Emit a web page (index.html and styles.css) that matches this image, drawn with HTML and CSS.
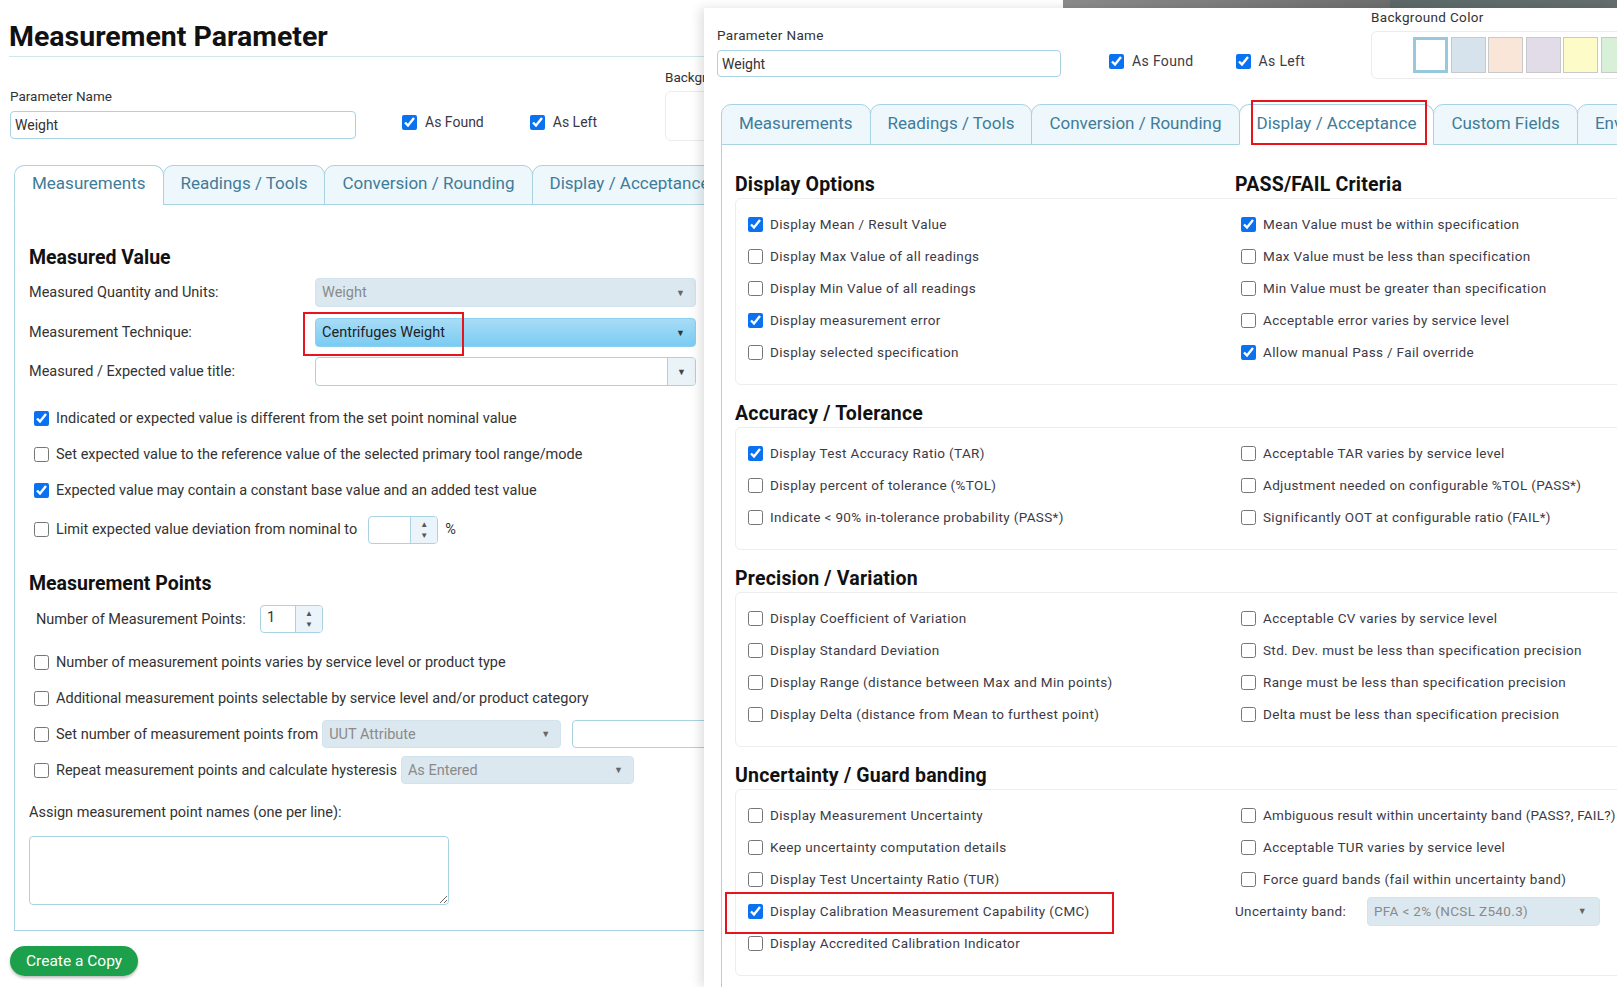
FILE: index.html
```html
<!DOCTYPE html>
<html lang="en">
<head>
  <meta charset="UTF-8" />
  <title>Measurement Parameter</title>
  <link rel="stylesheet" href="styles.css">
</head>
<body>

  <!-- page in the background -->
  <div class="page">
    <h1 class="page-title">Measurement Parameter</h1>

    <div class="param-row">
      <div class="name-group">
        <label class="field-label">Parameter Name</label>
        <input class="text-input name-input" type="text" value="Weight">
      </div>
      <div class="flags">
        <label class="flag"><input type="checkbox" checked> As Found</label>
        <label class="flag"><input type="checkbox" checked> As Left</label>
      </div>
      <div class="bg-group">
        <div class="field-label">Background Color</div>
        <div class="swatch-box"></div>
      </div>
    </div>

    <div class="tabs">
      <div class="tab active">Measurements</div>
      <div class="tab">Readings / Tools</div>
      <div class="tab">Conversion / Rounding</div>
      <div class="tab">Display / Acceptance</div>
    </div>

    <div class="tab-panel">
      <h2 class="section-title">Measured Value</h2>

      <div class="field-row first">
        <span>Measured Quantity and Units:</span>
        <div class="select disabled"><span>Weight</span><i class="arrow">▼</i></div>
      </div>
      <div class="field-row second">
        <span>Measurement Technique:</span>
        <div class="select technique">
          <span>Centrifuges Weight</span><i class="arrow">▼</i>
          <b class="annot annot-technique"></b>
        </div>
      </div>
      <div class="field-row third">
        <span>Measured / Expected value title:</span>
        <div class="combo"><span></span><i class="combo-btn">▼</i></div>
      </div>

      <div class="check-list">
        <label class="check"><input type="checkbox" checked> Indicated or expected value is different from the set point nominal value</label>
        <label class="check"><input type="checkbox"> Set expected value to the reference value of the selected primary tool range/mode</label>
        <label class="check"><input type="checkbox" checked> Expected value may contain a constant base value and an added test value</label>
        <label class="check tall"><input type="checkbox"> Limit expected value deviation from nominal to
          <span class="spinner dev-spin"><span></span><i class="spin-btn">▲<br>▼</i></span> %</label>
      </div>

      <h2 class="section-title points-title">Measurement Points</h2>

      <div class="points-row">
        <span>Number of Measurement Points:</span>
        <span class="spinner count-spin"><span>1</span><i class="spin-btn">▲<br>▼</i></span>
      </div>

      <div class="check-list points-list">
        <label class="check"><input type="checkbox"> Number of measurement points varies by service level or product type</label>
        <label class="check"><input type="checkbox"> Additional measurement points selectable by service level and/or product category</label>
        <label class="check"><input type="checkbox"> Set number of measurement points from
          <span class="select disabled uut"><span>UUT Attribute</span><i class="arrow">▼</i></span>
          <span class="text-input uut-value"></span></label>
        <label class="check"><input type="checkbox"> Repeat measurement points and calculate hysteresis
          <span class="select disabled entered"><span>As Entered</span><i class="arrow">▼</i></span></label>
      </div>

      <div class="names-label">Assign measurement point names (one per line):</div>
      <textarea class="names-box"></textarea>
    </div>

    <button class="btn-copy">Create a Copy</button>
  </div>

  <div class="top-strip"></div>

  <!-- dialog window on top -->
  <div class="dialog">
    <div class="dlg-head">
      <div class="name-group">
        <label class="field-label">Parameter Name</label>
        <input class="text-input name-input" type="text" value="Weight">
      </div>
      <div class="flags">
        <label class="flag"><input type="checkbox" checked> As Found</label>
        <label class="flag"><input type="checkbox" checked> As Left</label>
      </div>
      <div class="bg-group">
        <div class="field-label">Background Color</div>
        <div class="swatch-box">
          <span class="swatch selected"></span>
          <span class="swatch c-blue"></span>
          <span class="swatch c-peach"></span>
          <span class="swatch c-lilac"></span>
          <span class="swatch c-yellow"></span>
          <span class="swatch c-green"></span>
        </div>
      </div>
    </div>

    <div class="tabs">
      <div class="tab">Measurements</div>
      <div class="tab">Readings / Tools</div>
      <div class="tab">Conversion / Rounding</div>
      <div class="tab active">Display / Acceptance<b class="annot annot-tab"></b></div>
      <div class="tab">Custom Fields</div>
      <div class="tab">Environment</div>
    </div>

    <div class="tab-panel">
      <div class="opt-head">
        <h3>Display Options</h3>
        <h3>PASS/FAIL Criteria</h3>
      </div>
      <div class="opt-box">
        <div class="opt-col">
          <label class="opt"><input type="checkbox" checked> Display Mean / Result Value</label>
          <label class="opt"><input type="checkbox"> Display Max Value of all readings</label>
          <label class="opt"><input type="checkbox"> Display Min Value of all readings</label>
          <label class="opt"><input type="checkbox" checked> Display measurement error</label>
          <label class="opt"><input type="checkbox"> Display selected specification</label>
        </div>
        <div class="opt-col">
          <label class="opt"><input type="checkbox" checked> Mean Value must be within specification</label>
          <label class="opt"><input type="checkbox"> Max Value must be less than specification</label>
          <label class="opt"><input type="checkbox"> Min Value must be greater than specification</label>
          <label class="opt"><input type="checkbox"> Acceptable error varies by service level</label>
          <label class="opt"><input type="checkbox" checked> Allow manual Pass / Fail override</label>
        </div>
      </div>

      <div class="opt-head">
        <h3>Accuracy / Tolerance</h3>
      </div>
      <div class="opt-box">
        <div class="opt-col">
          <label class="opt"><input type="checkbox" checked> Display Test Accuracy Ratio (TAR)</label>
          <label class="opt"><input type="checkbox"> Display percent of tolerance (%TOL)</label>
          <label class="opt"><input type="checkbox"> Indicate &lt; 90% in-tolerance probability (PASS*)</label>
        </div>
        <div class="opt-col">
          <label class="opt"><input type="checkbox"> Acceptable TAR varies by service level</label>
          <label class="opt"><input type="checkbox"> Adjustment needed on configurable %TOL (PASS*)</label>
          <label class="opt"><input type="checkbox"> Significantly OOT at configurable ratio (FAIL*)</label>
        </div>
      </div>

      <div class="opt-head">
        <h3>Precision / Variation</h3>
      </div>
      <div class="opt-box">
        <div class="opt-col">
          <label class="opt"><input type="checkbox"> Display Coefficient of Variation</label>
          <label class="opt"><input type="checkbox"> Display Standard Deviation</label>
          <label class="opt"><input type="checkbox"> Display Range (distance between Max and Min points)</label>
          <label class="opt"><input type="checkbox"> Display Delta (distance from Mean to furthest point)</label>
        </div>
        <div class="opt-col">
          <label class="opt"><input type="checkbox"> Acceptable CV varies by service level</label>
          <label class="opt"><input type="checkbox"> Std. Dev. must be less than specification precision</label>
          <label class="opt"><input type="checkbox"> Range must be less than specification precision</label>
          <label class="opt"><input type="checkbox"> Delta must be less than specification precision</label>
        </div>
      </div>

      <div class="opt-head">
        <h3>Uncertainty / Guard banding</h3>
      </div>
      <div class="opt-box">
        <div class="opt-col">
          <label class="opt"><input type="checkbox"> Display Measurement Uncertainty</label>
          <label class="opt"><input type="checkbox"> Keep uncertainty computation details</label>
          <label class="opt"><input type="checkbox"> Display Test Uncertainty Ratio (TUR)</label>
          <label class="opt marked"><input type="checkbox" checked> Display Calibration Measurement Capability (CMC)<b class="annot annot-cmc"></b></label>
          <label class="opt"><input type="checkbox"> Display Accredited Calibration Indicator</label>
        </div>
        <div class="opt-col">
          <label class="opt ambiguous"><input type="checkbox"> Ambiguous result within uncertainty band (PASS?, FAIL?)</label>
          <label class="opt"><input type="checkbox"> Acceptable TUR varies by service level</label>
          <label class="opt"><input type="checkbox"> Force guard bands (fail within uncertainty band)</label>
          <div class="opt band-row">
            <span class="band-label">Uncertainty band:</span>
            <div class="select disabled band"><span>PFA &lt; 2% (NCSL Z540.3)</span><i class="arrow">▼</i></div>
          </div>
        </div>
      </div>
    </div>
  </div>

</body>
</html>
```

FILE: styles.css
```css
body {
  margin: 0;
  height: 987px;
  overflow: hidden;
  position: relative;
  background: #fff;
  font-family: Roboto, "Liberation Sans", sans-serif;
  color: #3b3744;
}
input[type="checkbox"] {
  width: 15px;
  height: 15px;
  margin: 0;
  flex: none;
  accent-color: #0a72f0;
}

/* background page */
.page {
  width: 900px;
  padding: 0 10px;
}
.page-title {
  margin: 0 0 0 -1px;
  width: 720px;
  padding: 20px 0 2px;
  font-size: 28.5px;
  line-height: 34px;
  font-weight: 700;
  color: #111;
  border-bottom: 1px solid #cfe6ef;
}
.param-row, .dlg-head {
  display: flex;
  align-items: flex-start;
}
.param-row > *, .dlg-head > * {
  flex: none;
}
.param-row {
  margin-top: 12px;
}
.name-group {
  margin-top: 19px;
  width: 346px;
}
.field-label {
  display: block;
  font-size: 13.5px;
  line-height: 16px;
  color: #333;
  white-space: nowrap;
}
.text-input {
  box-sizing: border-box;
  display: block;
  border: 1px solid #a9d3e3;
  border-radius: 4px;
  background: #fff;
  font: inherit;
  color: #333;
}
.name-input {
  width: 100%;
  height: 28px;
  margin-top: 7px;
  padding: 0 4px;
  font-size: 14px;
}
.flags {
  display: flex;
  gap: 46px;
  width: 263px;
  margin: 45px 0 0 46px;
}
.flag {
  display: flex;
  align-items: center;
  gap: 8px;
  font-size: 14px;
  line-height: 16px;
  white-space: nowrap;
  flex: none;
}
.swatch-box {
  box-sizing: border-box;
  height: 50px;
  width: 300px;
  margin-top: 6px;
  border: 1px solid #ececec;
  border-radius: 6px;
}

.tabs {
  display: flex;
  margin: 24px 0 0 4px;
}
.tab {
  position: relative;
  box-sizing: border-box;
  height: 40px;
  display: flex;
  align-items: center;
  flex: none;
  padding: 0 17px 4px;
  margin-right: -1px;
  font-size: 17px;
  letter-spacing: 0;
  color: #3e7c99;
  background: #eef7fb;
  border: 1px solid #a9d3e3;
  border-radius: 10px 10px 0 0;
  white-space: nowrap;
}
.tab.active {
  background: #fff;
  border-bottom-color: #fff;
}
.tab-panel {
  width: 720px;
  margin-left: 4px;
  padding: 41px 15px 25px 14px;
  border-left: 1px solid #a9d3e3;
  border-bottom: 1px solid #a9d3e3;
  font-size: 14.5px;
}
.section-title {
  margin: 0;
  font-size: 19.5px;
  line-height: 24px;
  font-weight: 700;
  color: #111;
}
.field-row {
  display: grid;
  grid-template-columns: 286px 381px;
  align-items: center;
  height: 29px;
  color: #333;
}
.field-row.first { margin-top: 8px; }
.field-row.second { margin-top: 11px; }
.field-row.third { margin-top: 10px; }

.select {
  position: relative;
  box-sizing: border-box;
  height: 29px;
  display: flex;
  align-items: center;
  justify-content: space-between;
  padding: 0 10px 0 6px;
  border-radius: 4px;
  color: #222;
}
.select.disabled {
  background: #dbe8f0;
  border: 1px solid #d3e3ed;
  color: #8a8a8a;
}
.select.technique {
  background: linear-gradient(#a9dcf6, #79ccf3);
  border: 1px solid #8ccfee;
}
.arrow {
  font-style: normal;
  font-size: 9px;
  color: #666;
}
.technique .arrow { color: #333; }
.combo {
  box-sizing: border-box;
  height: 29px;
  display: flex;
  border: 1px solid #a9d3e3;
  border-radius: 4px;
  overflow: hidden;
}
.combo span { flex: 1; }
.combo-btn {
  width: 27px;
  display: flex;
  align-items: center;
  justify-content: center;
  font-style: normal;
  font-size: 9px;
  color: #444;
  background: #e9f3f8;
  border-left: 1px solid #a9d3e3;
}

.check-list {
  margin-top: 14px;
  padding-left: 5px;
}
.check {
  display: flex;
  align-items: center;
  gap: 7px;
  height: 36px;
  white-space: nowrap;
  color: #333;
}
.check.tall { height: 43px; }
.spinner {
  box-sizing: border-box;
  height: 28px;
  display: inline-flex;
  border: 1px solid #a9d3e3;
  border-radius: 4px;
  overflow: hidden;
  background: #fff;
  flex: none;
}
.spinner span {
  flex: 1;
  padding: 2px 6px 0;
  line-height: 20px;
}
.spin-btn {
  width: 26px;
  font-style: normal;
  font-size: 8px;
  line-height: 11px;
  text-align: center;
  padding-top: 2px;
  color: #555;
  background: #eaf4fa;
  border-left: 1px solid #a9d3e3;
}
.dev-spin {
  width: 70px;
  margin-left: 4px;
}
.points-title { margin-top: 21px; }
.points-row {
  display: grid;
  grid-template-columns: 224px 63px;
  align-items: center;
  height: 28px;
  margin-top: 9px;
  padding-left: 7px;
  color: #333;
}
.count-spin { width: 63px; }
.points-list { margin-top: 11px; }
.check .select {
  height: 28px;
  margin-left: -3px;
  flex: none;
}
.uut { width: 239px; }
.uut-value {
  width: 160px;
  height: 28px;
  margin-left: 4px;
  flex: none;
}
.entered { width: 233px; }
.names-label {
  margin-top: 17px;
  line-height: 16px;
  color: #333;
}
.names-box {
  display: block;
  box-sizing: border-box;
  width: 420px;
  height: 69px;
  margin-top: 15px;
  border: 1px solid #a9d3e3;
  border-radius: 4px;
}
.btn-copy {
  margin-top: 15px;
  height: 30px;
  padding: 0 16px;
  border: none;
  border-radius: 15px;
  background: #1ca04b;
  color: #fff;
  font-family: inherit;
  font-size: 15.5px;
  box-shadow: 0 2px 3px rgba(0, 0, 0, 0.25);
}

/* red annotation frames */
.annot {
  position: absolute;
  border: 2px solid #e8141b;
  pointer-events: none;
}
.annot-technique {
  left: -13px;
  top: -7px;
  width: 157px;
  height: 40px;
}
.annot-tab {
  left: 11px;
  right: 6px;
  top: -5px;
  bottom: -1px;
}
.annot-cmc {
  left: -23px;
  top: -3px;
  width: 385px;
  height: 38px;
}

/* dialog window */
.top-strip {
  position: absolute;
  top: 0;
  left: 1063px;
  right: 0;
  height: 8px;
  background: linear-gradient(90deg, #8c8c8c 0, #6e6e6e 59%, #5d6969 59%, #646e6e 100%);
}
.dialog {
  position: absolute;
  left: 704px;
  top: 8px;
  right: 0;
  bottom: 0;
  overflow: hidden;
  padding: 1px 0 0 13px;
  background: #fff;
  box-shadow: -4px 0 10px rgba(0, 0, 0, 0.12);
  letter-spacing: 0.35px;
  color: #3d3a46;
  font-size: 13.5px;
}
.dialog .name-group {
  margin-top: 18px;
  width: 344px;
}
.dialog .name-input {
  height: 27px;
}
.dialog .flags {
  width: 262px;
  margin: 44px 0 0 48px;
  gap: 42px;
}
.dialog .swatch-box {
  display: flex;
  gap: 2.5px;
  width: 320px;
  height: 48px;
  padding: 5px 0 0 41px;
}
.swatch {
  box-sizing: border-box;
  flex: none;
  width: 35px;
  height: 36px;
  border: 1px solid #c9c9c9;
}
.swatch.selected {
  background: #fff;
  border: 3px solid #98c8de;
}
.c-blue { background: #d6e2ec; }
.c-peach { background: #fae6d8; }
.c-lilac { background: #e2dce8; }
.c-yellow { background: #fdfcc9; }
.c-green { background: #d8efd8; }

.dialog .tabs {
  margin-top: 25px;
}
.dialog .tab {
  height: 41px;
}
.dialog .tab-panel {
  width: auto;
  padding: 25px 0 0 13px;
  border-bottom: none;
  height: 900px;
  font-size: 13.5px;
}
.opt-head {
  display: grid;
  grid-template-columns: 500px 1fr;
}
.opt-head h3 {
  margin: 0;
  padding-top: 3px;
  font-size: 19.5px;
  line-height: 24px;
  font-weight: 700;
  color: #111;
  letter-spacing: 0.2px;
}
.opt-box {
  display: grid;
  grid-template-columns: 493px 1fr;
  margin: 1px -20px 14px 0;
  padding: 9px 0 16px 12px;
  border: 1px solid #ebedef;
  border-radius: 6px;
}
.opt {
  position: relative;
  display: flex;
  align-items: center;
  gap: 7px;
  height: 32px;
  white-space: nowrap;
}
.opt.ambiguous {
  letter-spacing: 0.25px;
}
.band-row {
  margin-left: -6px;
}
.band-label {
  width: 125px;
}
.select.band {
  width: 233px;
  padding-right: 12px;
}
```
